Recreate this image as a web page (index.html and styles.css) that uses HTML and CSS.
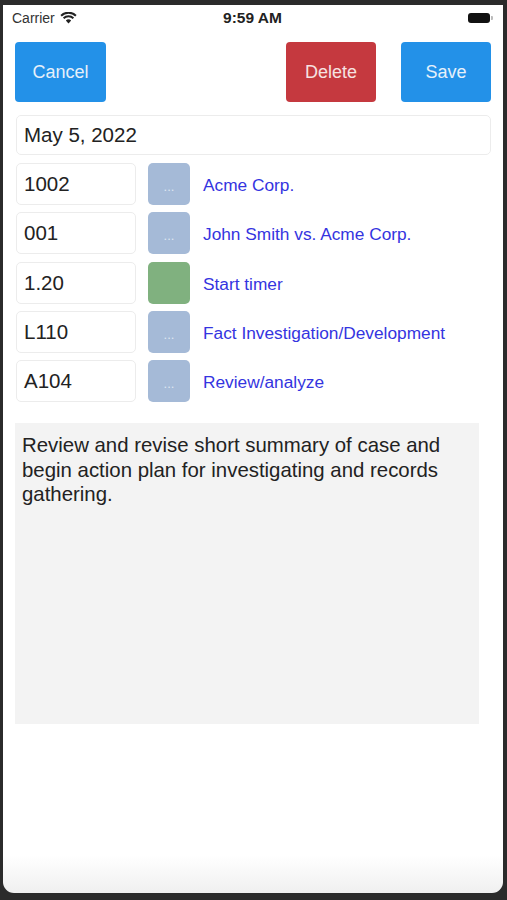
FILE: index.html
```html
<!DOCTYPE html>
<html lang="en">
<head>
    <meta charset="UTF-8">
    <meta name="viewport" content="width=device-width, initial-scale=1.0">
    <title>Time Entry</title>
    <link rel="stylesheet" href="styles.css">
</head>
<body>

<div class="phone">
    <div class="statusbar">
        <div class="carrier">
            Carrier
            <svg class="wifi" width="17" height="12" viewBox="0 0 17 12">
                <path d="M8.5 11.5 L5.8 8.6 A3.9 3.9 0 0 1 11.2 8.6 Z" fill="#222"/>
                <path d="M3.6 6.3 A7 7 0 0 1 13.4 6.3" stroke="#222" stroke-width="2" fill="none"/>
                <path d="M1.1 3.7 A10.6 10.6 0 0 1 15.9 3.7" stroke="#222" stroke-width="2" fill="none"/>
            </svg>
        </div>
        <div class="clock">9:59 AM</div>
        <div class="battery"><span class="battery-body"></span><span class="battery-nub"></span></div>
    </div>

    <div class="content">
        <div class="toolbar">
            <button class="btn btn-blue btn-wide">Cancel</button>
            <span class="spacer"></span>
            <button class="btn btn-red">Delete</button>
            <button class="btn btn-blue">Save</button>
        </div>

        <div class="field date-field">May 5, 2022</div>

        <div class="rows">
            <div class="row">
                <div class="field code">1002</div>
                <div class="pick">...</div>
                <a class="row-label" href="">Acme Corp.</a>
            </div>
            <div class="row">
                <div class="field code">001</div>
                <div class="pick">...</div>
                <a class="row-label" href="">John Smith vs. Acme Corp.</a>
            </div>
            <div class="row">
                <div class="field code">1.20</div>
                <div class="pick pick-green"></div>
                <a class="row-label" href="">Start timer</a>
            </div>
            <div class="row">
                <div class="field code">L110</div>
                <div class="pick">...</div>
                <a class="row-label" href="">Fact Investigation/Development</a>
            </div>
            <div class="row">
                <div class="field code">A104</div>
                <div class="pick">...</div>
                <a class="row-label" href="">Review/analyze</a>
            </div>
        </div>

        <div class="notes">Review and revise short summary of case and begin action plan for investigating and records gathering.</div>
    </div>
</div>

</body>
</html>
```

FILE: styles.css
```css
body {
    margin: 0;
    padding: 0;
    background-color: #2b2b2b;
    font-family: 'Liberation Sans', Arial, sans-serif;
}

.phone {
    margin: 5px 4px 0 3px;
    height: 888px;
    background: linear-gradient(to bottom, #fff 0, #fff 850px, #f0f0f0 888px);
    border-radius: 0 0 11px 11px;
    overflow: hidden;
}

.statusbar {
    height: 26px;
    display: flex;
    align-items: center;
    padding: 0 9px;
}
.carrier {
    font-size: 14px;
    color: #333;
    display: flex;
    align-items: center;
    gap: 5px;
    flex: 1;
}
.clock {
    font-size: 15.5px;
    font-weight: bold;
    color: #222;
    flex: 1;
    text-align: center;
}
.battery {
    flex: 1;
    display: flex;
    justify-content: flex-end;
    align-items: center;
    padding-right: 1px;
}
.battery-body {
    width: 22px;
    height: 10px;
    background-color: #111;
    border-radius: 3px;
}
.battery-nub {
    width: 2px;
    height: 4px;
    background-color: #bbb;
    margin-left: 1px;
    border-radius: 0 1px 1px 0;
}

.content {
    padding: 11px 12px 0 12px;
}

.toolbar {
    display: flex;
    gap: 25px;
}
.spacer {
    flex: 1;
}
.btn {
    width: 90px;
    height: 60px;
    border: none;
    border-radius: 4px;
    color: #e6f0fa;
    font-family: 'Liberation Sans', Arial, sans-serif;
    font-size: 18px;
    padding: 0;
}
.btn-wide {
    width: 91px;
}
.btn-blue {
    background-color: #2391e8;
}
.btn-red {
    background-color: #c5393f;
    color: #f6e2e2;
}

.field {
    box-sizing: border-box;
    border: 1px solid #ececec;
    border-radius: 5px;
    font-size: 20.5px;
    color: #222;
    display: flex;
    align-items: center;
    padding-left: 7px;
}
.date-field {
    margin: 13px 0 0 1px;
    height: 40px;
}

.rows {
    display: flex;
    flex-direction: column;
    gap: 7.25px;
    margin-top: 8px;
}
.row {
    display: flex;
    align-items: center;
    height: 42px;
}
.code {
    width: 120px;
    height: 42px;
    margin-left: 1px;
}
.pick {
    width: 42px;
    height: 42px;
    margin-left: 12px;
    border-radius: 5px;
    background-color: #a5bad7;
    color: #dfe7f2;
    font-size: 13px;
    display: flex;
    align-items: center;
    justify-content: center;
    padding-top: 5px;
    box-sizing: border-box;
}
.pick-green {
    background-color: #80b17f;
}
.row-label {
    margin-left: 13px;
    padding-top: 3px;
    font-size: 17.3px;
    color: #3434e0;
    text-decoration: none;
}

.notes {
    margin-top: 21px;
    width: 464px;
    height: 301px;
    box-sizing: border-box;
    background-color: #f3f3f3;
    padding: 10px 7px;
    font-size: 20.4px;
    line-height: 24.5px;
    color: #222;
}
```
